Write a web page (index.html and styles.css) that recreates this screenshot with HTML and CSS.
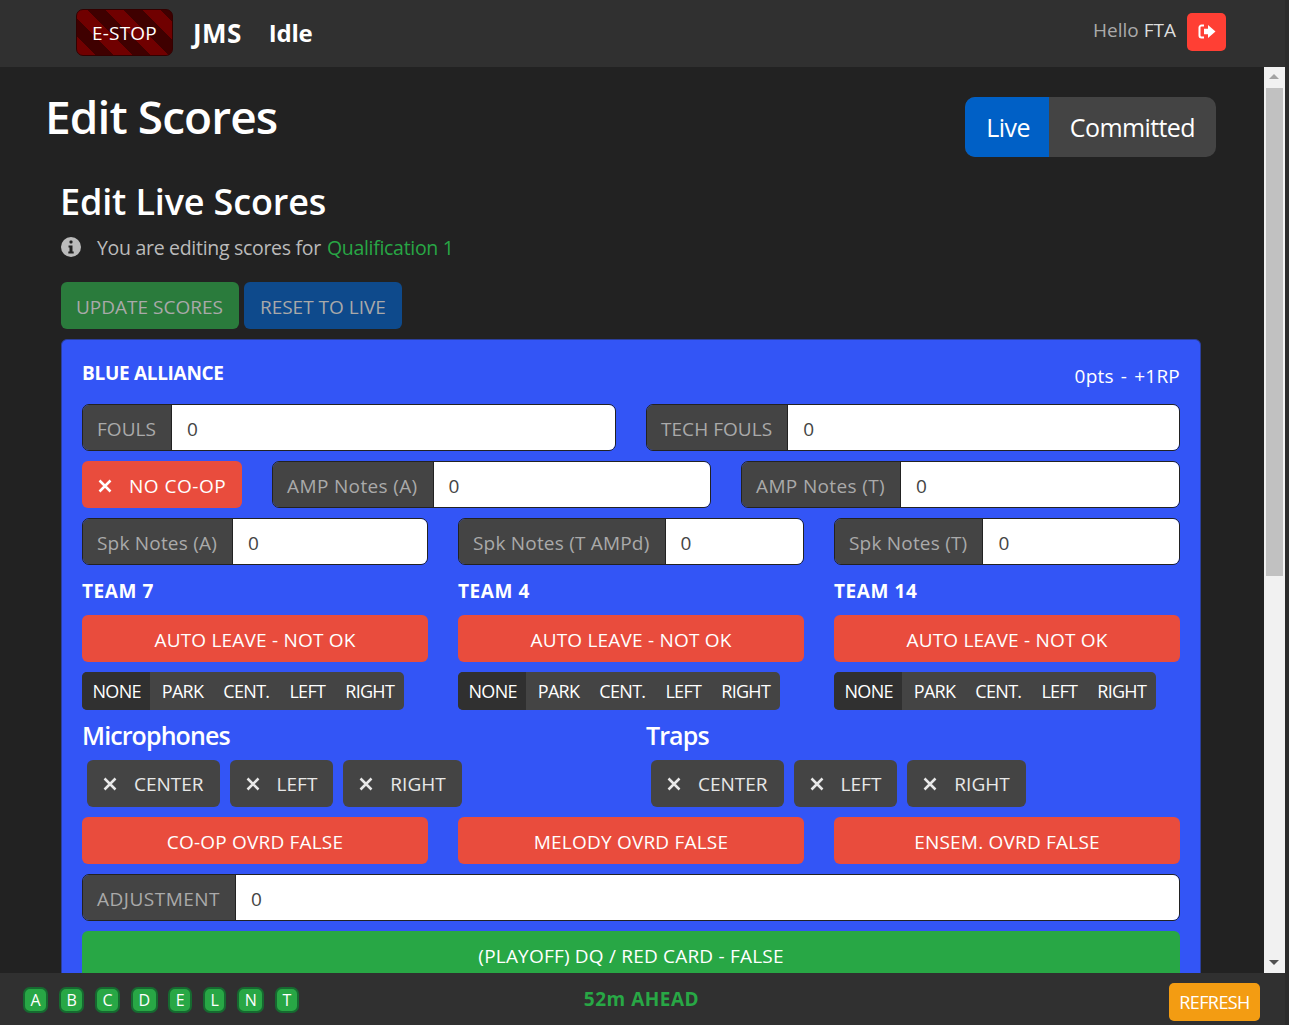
FILE: index.html
```html
<!DOCTYPE html>
<html>
<head>
  <meta charset="UTF-8">
  <title>Edit Scores</title>
  <link rel="stylesheet" href="styles.css">
</head>
<body>
  <div class="app">
    <nav class="topbar">
      <div class="brand">
        <button class="estop">E-STOP</button>
        <span class="navtitle jms">JMS</span>
        <span class="navtitle">Idle</span>
      </div>
      <div class="user">
        <span class="hello">Hello <b>FTA</b></span>
        <button class="logout">
          <svg width="18" height="15" viewBox="0 0 18 15"><path d="M6 1.500H3.500a2 2 0 0 0-2 2v8a2 2 0 0 0 2 2H6" fill="none" stroke="#fff" stroke-width="2"/><path d="M10 1 17.500 7.500 10 14V10.300H6V4.700H10Z" fill="#fff"/></svg>
        </button>
      </div>
    </nav>
    <div class="middle">
      <main class="content">
        <div class="pagehead">
          <h1>Edit Scores</h1>
          <div class="tabs"><span class="tab active">Live</span><span class="tab">Committed</span></div>
        </div>
        <div class="inner">
          <h2>Edit Live Scores</h2>
          <p class="note">
            <svg class="infoicon" width="20" height="20" viewBox="0 0 20 20"><circle cx="10" cy="10" r="10" fill="#bbb"/><rect x="8.500" y="3.500" width="3" height="3" rx="1" fill="#222"/><path d="M7.500 8.500h4v6h1.200v2H7.300v-2h1.200v-4h-1Z" fill="#222"/></svg>
            You are editing scores for <span class="matchname">Qualification 1</span>
          </p>
          <div class="actions">
            <button class="btn dim green">UPDATE SCORES</button>
            <button class="btn dim blue">RESET TO LIVE</button>
          </div>
          <section class="alliance">
            <div class="alliancehead"><strong>BLUE ALLIANCE</strong><span class="pts">0pts - +1RP</span></div>
            <div class="row half">
              <div class="field"><label class="caps">FOULS</label><div class="val">0</div></div>
              <div class="field"><label class="caps">TECH FOULS</label><div class="val">0</div></div>
            </div>
            <div class="row coop">
              <button class="btn red check nocoop"><svg class="x" width="14" height="14" viewBox="0 0 14 14"><path d="M1.500 1.500 12.500 12.500M12.500 1.500 1.500 12.500"/></svg>NO CO-OP</button>
              <div class="field grow"><label class="amp">AMP Notes (A)</label><div class="val">0</div></div>
              <div class="field grow"><label class="amp">AMP Notes (T)</label><div class="val">0</div></div>
            </div>
            <div class="row thirds">
              <div class="field"><label>Spk Notes (A)</label><div class="val">0</div></div>
              <div class="field"><label>Spk Notes (T AMPd)</label><div class="val">0</div></div>
              <div class="field"><label>Spk Notes (T)</label><div class="val">0</div></div>
            </div>
            <div class="thirds teams">
              <div class="team">
                <h4>TEAM 7</h4>
                <button class="btn red wide">AUTO LEAVE - NOT OK</button>
                <div class="seg"><span class="on">NONE</span><span>PARK</span><span>CENT.</span><span>LEFT</span><span>RIGHT</span></div>
              </div>
              <div class="team">
                <h4>TEAM 4</h4>
                <button class="btn red wide">AUTO LEAVE - NOT OK</button>
                <div class="seg"><span class="on">NONE</span><span>PARK</span><span>CENT.</span><span>LEFT</span><span>RIGHT</span></div>
              </div>
              <div class="team">
                <h4>TEAM 14</h4>
                <button class="btn red wide">AUTO LEAVE - NOT OK</button>
                <div class="seg"><span class="on">NONE</span><span>PARK</span><span>CENT.</span><span>LEFT</span><span>RIGHT</span></div>
              </div>
            </div>
            <div class="half stage">
              <div>
                <h3>Microphones</h3>
                <div class="checks">
                  <button class="btn grey check"><svg class="x" width="14" height="14" viewBox="0 0 14 14"><path d="M1.500 1.500 12.500 12.500M12.500 1.500 1.500 12.500"/></svg>CENTER</button>
                  <button class="btn grey check"><svg class="x" width="14" height="14" viewBox="0 0 14 14"><path d="M1.500 1.500 12.500 12.500M12.500 1.500 1.500 12.500"/></svg>LEFT</button>
                  <button class="btn grey check"><svg class="x" width="14" height="14" viewBox="0 0 14 14"><path d="M1.500 1.500 12.500 12.500M12.500 1.500 1.500 12.500"/></svg>RIGHT</button>
                </div>
              </div>
              <div>
                <h3>Traps</h3>
                <div class="checks">
                  <button class="btn grey check"><svg class="x" width="14" height="14" viewBox="0 0 14 14"><path d="M1.500 1.500 12.500 12.500M12.500 1.500 1.500 12.500"/></svg>CENTER</button>
                  <button class="btn grey check"><svg class="x" width="14" height="14" viewBox="0 0 14 14"><path d="M1.500 1.500 12.500 12.500M12.500 1.500 1.500 12.500"/></svg>LEFT</button>
                  <button class="btn grey check"><svg class="x" width="14" height="14" viewBox="0 0 14 14"><path d="M1.500 1.500 12.500 12.500M12.500 1.500 1.500 12.500"/></svg>RIGHT</button>
                </div>
              </div>
            </div>
            <div class="row thirds">
              <button class="btn red wide">CO-OP OVRD FALSE</button>
              <button class="btn red wide">MELODY OVRD FALSE</button>
              <button class="btn red wide">ENSEM. OVRD FALSE</button>
            </div>
            <div class="row">
              <div class="field grow"><label class="adj">ADJUSTMENT</label><div class="val">0</div></div>
            </div>
            <button class="btn greenfull wide">(PLAYOFF) DQ / RED CARD - FALSE</button>
          </section>
        </div>
      </main>
      <div class="scrollbar">
        <div class="arrow up"></div>
        <div class="track"><div class="thumb"></div></div>
        <div class="arrow down"></div>
      </div>
    </div>
    <footer class="bottombar">
      <div class="lights">
        <span>A</span><span>B</span><span>C</span><span>D</span><span>E</span><span>L</span><span>N</span><span>T</span>
      </div>
      <div class="ahead">52m AHEAD</div>
      <button class="refresh">REFRESH</button>
    </footer>
  </div>
</body>
</html>
```
FILE: styles.css
```css
html,body{margin:0;height:100%;overflow:hidden}
body{font-family:"Open Sans","Noto Sans",Arial,sans-serif;background:#2b2b2b;color:#fff;font-size:19px;letter-spacing:-.3px}
button{font:inherit;letter-spacing:inherit;border:0;color:#fff}
h1,h2,h3,h4,p{margin:0}

.app{display:flex;flex-direction:column;height:1025px;width:1285px}
.topbar{height:67px;box-sizing:border-box;flex:none;background:#303030;display:flex;justify-content:space-between;align-items:center;padding:0 59px 2px 76px}
.brand{display:flex;align-items:center}
.estop{width:97px;height:47px;border-radius:7px;border:1px solid #300;background:repeating-linear-gradient(45deg,#700000 0 13px,#3f0000 13px 26px);padding:0;margin-right:20px;letter-spacing:.2px}
.navtitle{font-size:24px;font-weight:700;letter-spacing:-.2px}
.jms{font-size:26px;letter-spacing:.4px;margin-right:27px}
.user{display:flex;align-items:center;gap:11px;color:#aaa;margin-top:-2px;letter-spacing:0}
.hello{margin-bottom:4px}
.user b{font-weight:400;color:#ddd}
.logout{width:39px;height:38px;border-radius:5px;background:#ff3f34;padding:0;display:flex;align-items:center;justify-content:center}

.middle{flex:1;display:flex;min-height:0}
.content{flex:1;min-width:0;background:#222;overflow:hidden;padding:0 48px 0 45px}
.scrollbar{width:21px;flex:none;background:#f1f1f1;display:flex;flex-direction:column}
.arrow{height:21px;position:relative}
.arrow:after{content:"";position:absolute;left:5px;border:5px solid transparent}
.arrow.up:after{top:2px;border-bottom-color:#a3a3a3}
.arrow.down:after{top:8px;border-top-color:#505050}
.track{flex:1}
.thumb{height:488px;background:#c1c1c1;margin:0 2px}

.pagehead{display:flex;justify-content:space-between;padding-top:28px}
h1{font-size:46px;font-weight:600;line-height:42px;letter-spacing:-.9px}
.tabs{display:flex;height:60px;margin-top:2px;border-radius:10px;overflow:hidden;font-size:25px;letter-spacing:-.6px;background:#444}
.tab{display:flex;align-items:center;padding:0 21px}
.tab.active{background:#0060c6;padding:0 19px 0 21px}

.inner{padding:0 15px 0 16px}
h2{font-size:36px;font-weight:600;line-height:42px;margin:24px 0 0 -1px;letter-spacing:-.15px}
.note{display:flex;align-items:center;color:#bbb;margin-top:9px;height:30px;font-size:19.500px}
.infoicon{margin-right:16px}
.matchname{color:#28a745;margin-left:6px}
.actions{display:flex;gap:5px;margin-top:20px}

.btn{height:47px;border-radius:6px;padding:2px 16px 0;letter-spacing:.2px}
.dim{color:#a9a9a9;letter-spacing:0}
.dim.green{background:#2a7b3c;padding-left:15px}
.dim.blue{background:#0e4a8c}
.red{background:#e94c3d}
.grey{background:#444;color:#e8e8e8;padding-top:0;letter-spacing:0}
.greenfull{background:#28a745}
.wide{width:100%}

.alliance{background:#3355f6;border:1px solid #2b3f9c;border-radius:6px;margin-top:10px;padding:0 20px 40px}
.alliancehead{display:flex;justify-content:space-between;align-items:center;height:64px;box-sizing:border-box;padding-top:2px}
.alliancehead strong{font-weight:700;font-size:19px}
.pts{margin-top:6px;letter-spacing:.2px;word-spacing:2px}
.row{display:flex;margin-bottom:10px}
.half{display:grid;grid-template-columns:534px 534px;gap:30px}
.thirds{display:grid;grid-template-columns:repeat(3,346px);gap:30px}
.coop{gap:30px}
.nocoop{letter-spacing:.5px}

.field{display:flex;height:47px;box-sizing:border-box;border:1px solid #222;border-radius:7px;overflow:hidden;min-width:0}
.grow{flex:1 1 0}
.field label{background:#444;color:#aaa;display:flex;align-items:center;padding:2px 15px 0 14px;border-right:1px solid #222;white-space:nowrap;letter-spacing:.2px}
.field .caps{letter-spacing:.05px}
.field .amp{letter-spacing:.35px}
.field .adj{letter-spacing:.5px}
.val{flex:1;background:#fff;color:#444;display:flex;align-items:center;padding:2px 15px 0}

.check{display:flex;align-items:center;white-space:nowrap}
.x{margin-right:17px;fill:none;stroke:currentColor;stroke-width:2.500;flex:none}
.teams{padding-top:3px}
.team h4{font-size:19px;font-weight:700;line-height:26px;margin-bottom:11px;letter-spacing:.6px}
.seg{display:inline-flex;height:38px;background:#444;border-radius:5px;overflow:hidden;margin-top:10px;font-size:18px;letter-spacing:-.7px;align-items:stretch}
.seg span{display:flex;align-items:center;padding:0 10px}
.seg .on{background:#303030;padding:0 9px 0 10.500px;margin-right:2px}
.stage{margin-top:8px}
h3{font-size:25px;font-weight:600;line-height:34px;letter-spacing:-.9px}
.checks{display:flex;gap:10px;padding:8px 5px 10px}

.bottombar{height:52px;flex:none;background:#303030;display:grid;grid-template-columns:1fr auto 1fr;align-items:center;padding:0 25px 0 23px}
.lights{display:flex;gap:10.800px;margin-top:1px}
.lights span{height:22px;padding:0 5.500px;background:#28a745;border:2px solid #166a30;border-radius:7px;font-size:16px;letter-spacing:0;display:flex;align-items:center;justify-content:center}
.ahead{color:#28a745;font-weight:700;font-size:19px;letter-spacing:.5px}
.refresh{background:#f39c12;width:91px;height:38px;border-radius:5px;padding:0;font-size:18px;letter-spacing:-.6px;justify-self:end;margin-top:5px}
```
